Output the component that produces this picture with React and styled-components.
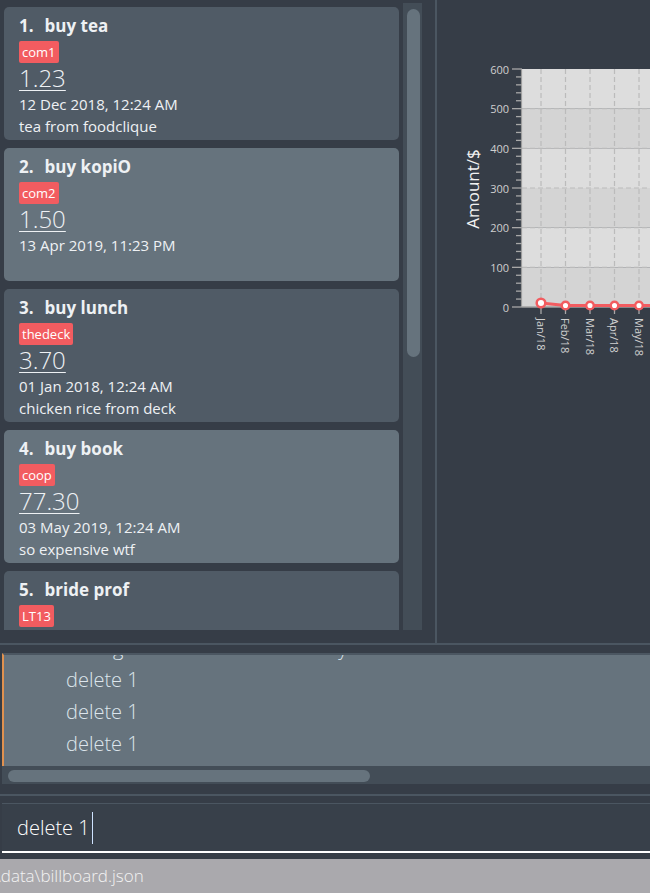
import React from "react";
import styled, { createGlobalStyle } from "styled-components";

const Global = createGlobalStyle`
  html, body { margin: 0; padding: 0; background: #363d47; }
  #root { width: 650px; height: 893px; overflow: hidden; }
`;

const Root = styled.div`
  width: 650px;
  height: 893px;
  display: flex;
  flex-direction: column;
  background: #363d47;
  font-family: "Open Sans", "Noto Sans", sans-serif;
  overflow: hidden;
`;

const Top = styled.div`
  height: 643px;
  flex: none;
  display: flex;
  border-bottom: 2px solid #4b5661;
`;

const ListPane = styled.div`
  width: 420px;
  flex: none;
  display: flex;
  padding: 3px 13px 13px 2px;
`;

const ListViewport = styled.div`
  flex: 1;
  overflow: hidden;
  display: flex;
  flex-direction: column;
  gap: 8px;
  padding: 4px 4px 0 2px;
`;

const Card = styled.div`
  flex: none;
  height: 133px;
  box-sizing: border-box;
  border-radius: 5px;
  background: ${(p) => (p.$even ? "#66737d" : "#505b66")};
  padding: 6px 15px 0;
  display: flex;
  flex-direction: column;
  color: #eef1f4;
`;

const Title = styled.div`
  font-size: 17px;
  font-weight: 700;
  line-height: 26px;
  white-space: nowrap;
`;

const Index = styled.span`
  margin-right: 11px;
`;

const Tags = styled.div`
  display: flex;
  gap: 4px;
  margin-top: 2px;
`;

const Tag = styled.span`
  background: #f25c60;
  color: #ffffff;
  font-size: 13px;
  line-height: 22px;
  padding: 0 3px;
  border-radius: 2px;
`;

const Price = styled.div`
  font-size: 24px;
  font-weight: 300;
  line-height: 27px;
  margin-top: 1px;
  align-self: flex-start;
  text-decoration: underline;
  text-decoration-thickness: 1px;
  text-underline-offset: 3px;
`;

const Line = styled.div`
  font-size: 15px;
  line-height: 22px;
  color: #eef1f4;
  margin-top: ${(p) => (p.$first ? "2px" : "0")};
`;

const VScroll = styled.div`
  width: 19px;
  flex: none;
  box-sizing: border-box;
  background: #434d57;
  padding: 6px 2px 0 4px;
`;

const VThumb = styled.div`
  height: 348px;
  border-radius: 7px;
  background: #66737d;
`;

const Divider = styled.div`
  width: 2px;
  flex: none;
  background: #4b5661;
`;

const ChartPane = styled.div`
  flex: 1;
  overflow: hidden;
`;

const ResultPane = styled.div`
  padding-top: 8px;
  flex: none;
`;

const ResultBox = styled.div`
  height: 111px;
  margin-left: 2px;
  border-top: 2px solid #4b5661;
  border-left: 2px solid #e0914f;
  background: #66737d;
  overflow: hidden;
  padding-left: 62px;
`;

const ResultText = styled.div`
  margin-top: -23px;
  font-size: 20px;
  font-weight: 300;
  line-height: 32px;
  color: #dde6ec;
  white-space: pre;
`;

const HScroll = styled.div`
  height: 18px;
  margin-left: 2px;
  box-sizing: border-box;
  background: #434d57;
  padding: 4px 0 2px 6px;
  flex: none;
`;

const HThumb = styled.div`
  width: 362px;
  height: 12px;
  border-radius: 6px;
  background: #66737d;
`;

const CommandPane = styled.div`
  margin-top: 10px;
  border-top: 2px solid #4b5661;
  padding: 7px 0 6px;
  flex: none;
`;

const CommandBox = styled.div`
  height: 47px;
  margin-left: 2px;
  border-top: 1px solid #4b5661;
  border-bottom: 2px solid #ffffff;
  background: #38404a;
  display: flex;
  align-items: center;
  padding-left: 15px;
  font-size: 20px;
  font-weight: 300;
  color: #ffffff;
`;

const Caret = styled.span`
  display: inline-block;
  width: 1px;
  height: 32px;
  margin-left: 2px;
  background: #cfe3ff;
`;

const StatusBar = styled.div`
  height: 34px;
  flex: none;
  background: #aaa9ad;
  color: #f3f3f3;
  font-size: 17px;
  line-height: 34px;
  font-weight: 300;
  overflow: hidden;
  white-space: nowrap;
`;

const StatusText = styled.span`
  display: inline-block;
  margin-left: -5px;
`;

const bills = [
  { n: 1, name: "buy tea", tag: "com1", amt: "1.23", date: "12 Dec 2018, 12:24 AM", desc: "tea from foodclique" },
  { n: 2, name: "buy kopiO", tag: "com2", amt: "1.50", date: "13 Apr 2019, 11:23 PM", desc: "" },
  { n: 3, name: "buy lunch", tag: "thedeck", amt: "3.70", date: "01 Jan 2018, 12:24 AM", desc: "chicken rice from deck" },
  { n: 4, name: "buy book", tag: "coop", amt: "77.30", date: "03 May 2019, 12:24 AM", desc: "so expensive wtf" },
  { n: 5, name: "bride prof", tag: "LT13", amt: "20.00", date: "05 Mar 2019, 12:24 AM", desc: "" },
];

const yTicks = [600, 500, 400, 300, 200, 100, 0];
const yOf = (v) => 307 - (v * 238) / 600;
const cats = ["Jan/18", "Feb/18", "Mar/18", "Apr/18", "May/18", "Jun/18"];
const xOf = (i) => 541 + i * 24.5;

function Chart() {
  const minor = [];
  for (let v = 0; v <= 600; v += 20) if (v % 100 !== 0) minor.push(v);
  const pts = cats.map((_, i) => [xOf(i), i === 0 ? 303 : 305.5]);
  return (
    <svg width="213" height="643" viewBox="437 0 213 643" style={{ display: "block" }}>
      {[0, 1, 2, 3, 4, 5].map((i) => (
        <rect
          key={i}
          x="522"
          y={yOf(600 - i * 100)}
          width="200"
          height={238 / 6}
          fill={i % 2 === 0 ? "#dddddd" : "#d4d4d4"}
        />
      ))}
      {[100, 200, 300, 400, 500].map((v) => (
        <line key={v} x1="522" x2="700" y1={yOf(v)} y2={yOf(v)} stroke="#bbbbbb" strokeWidth="1.2" strokeDasharray="5 3" />
      ))}
      {cats.map((c, i) => (
        <line key={c} x1={xOf(i)} x2={xOf(i)} y1="69" y2="307" stroke="#bbbbbb" strokeWidth="1.2" strokeDasharray="5 3" />
      ))}
      <line x1="521.5" x2="521.5" y1="69" y2="307" stroke="#9a9a9a" strokeWidth="1.2" />
      {yTicks.map((v) => (
        <g key={v}>
          <line x1="512" x2="522" y1={yOf(v)} y2={yOf(v)} stroke="#a8a8a8" strokeWidth="1.3" />
          <text
            x="509"
            y={yOf(v)}
            textAnchor="end"
            dominantBaseline="central"
            fontSize="11"
            fill="#cfcfcf"
            fontFamily="'Open Sans', sans-serif"
          >
            {v}
          </text>
        </g>
      ))}
      {minor.map((v) => (
        <line key={v} x1="516" x2="522" y1={yOf(v)} y2={yOf(v)} stroke="#a8a8a8" strokeWidth="1.3" />
      ))}
      <text
        transform="translate(472 189) rotate(-90)"
        textAnchor="middle"
        dominantBaseline="central"
        fontSize="17"
        fill="#f2f2f2"
        fontFamily="'Open Sans', sans-serif"
      >
        Amount/$
      </text>
      <line x1="522" x2="700" y1="307" y2="307" stroke="#a0a0a0" strokeWidth="1.3" />
      {cats.map((c, i) => (
        <g key={c}>
          <line x1={xOf(i)} x2={xOf(i)} y1="307" y2="314" stroke="#a8a8a8" strokeWidth="1.3" />
          <text
            transform={`translate(${xOf(i)} 318) rotate(90)`}
            dominantBaseline="central"
            fontSize="11"
            fill="#cfcfcf"
            fontFamily="'Open Sans', sans-serif"
          >
            {c}
          </text>
        </g>
      ))}
      <polyline
        points={pts.map((p) => p.join(",")).join(" ")}
        fill="none"
        stroke="#f25c60"
        strokeWidth="3"
      />
      {pts.map(([x, y], i) => (
        <circle key={i} cx={x} cy={y} r={i === 0 ? 4.3 : 3.8} fill="#ffffff" stroke="#f25c60" strokeWidth="2.5" />
      ))}
    </svg>
  );
}

export default function App() {
  return (
    <Root>
      <Global />
      <Top>
        <ListPane>
          <ListViewport>
            {bills.map((b) => (
              <Card key={b.n} $even={b.n % 2 === 0}>
                <Title>
                  <Index>{b.n}.</Index>
                  {b.name}
                </Title>
                <Tags>
                  <Tag>{b.tag}</Tag>
                </Tags>
                <Price>{b.amt}</Price>
                <Line $first>{b.date}</Line>
                {b.desc && <Line>{b.desc}</Line>}
              </Card>
            ))}
          </ListViewport>
          <VScroll>
            <VThumb />
          </VScroll>
        </ListPane>
        <Divider />
        <ChartPane>
          <Chart />
        </ChartPane>
      </Top>
      <ResultPane>
        <ResultBox>
          <ResultText>
            {"Listing all bills sorted in the way\ndelete 1\ndelete 1\ndelete 1"}
          </ResultText>
        </ResultBox>
        <HScroll>
          <HThumb />
        </HScroll>
      </ResultPane>
      <CommandPane>
        <CommandBox>
          delete 1<Caret />
        </CommandBox>
      </CommandPane>
      <StatusBar>
        <StatusText>{"\\data\\billboard.json"}</StatusText>
      </StatusBar>
    </Root>
  );
}
